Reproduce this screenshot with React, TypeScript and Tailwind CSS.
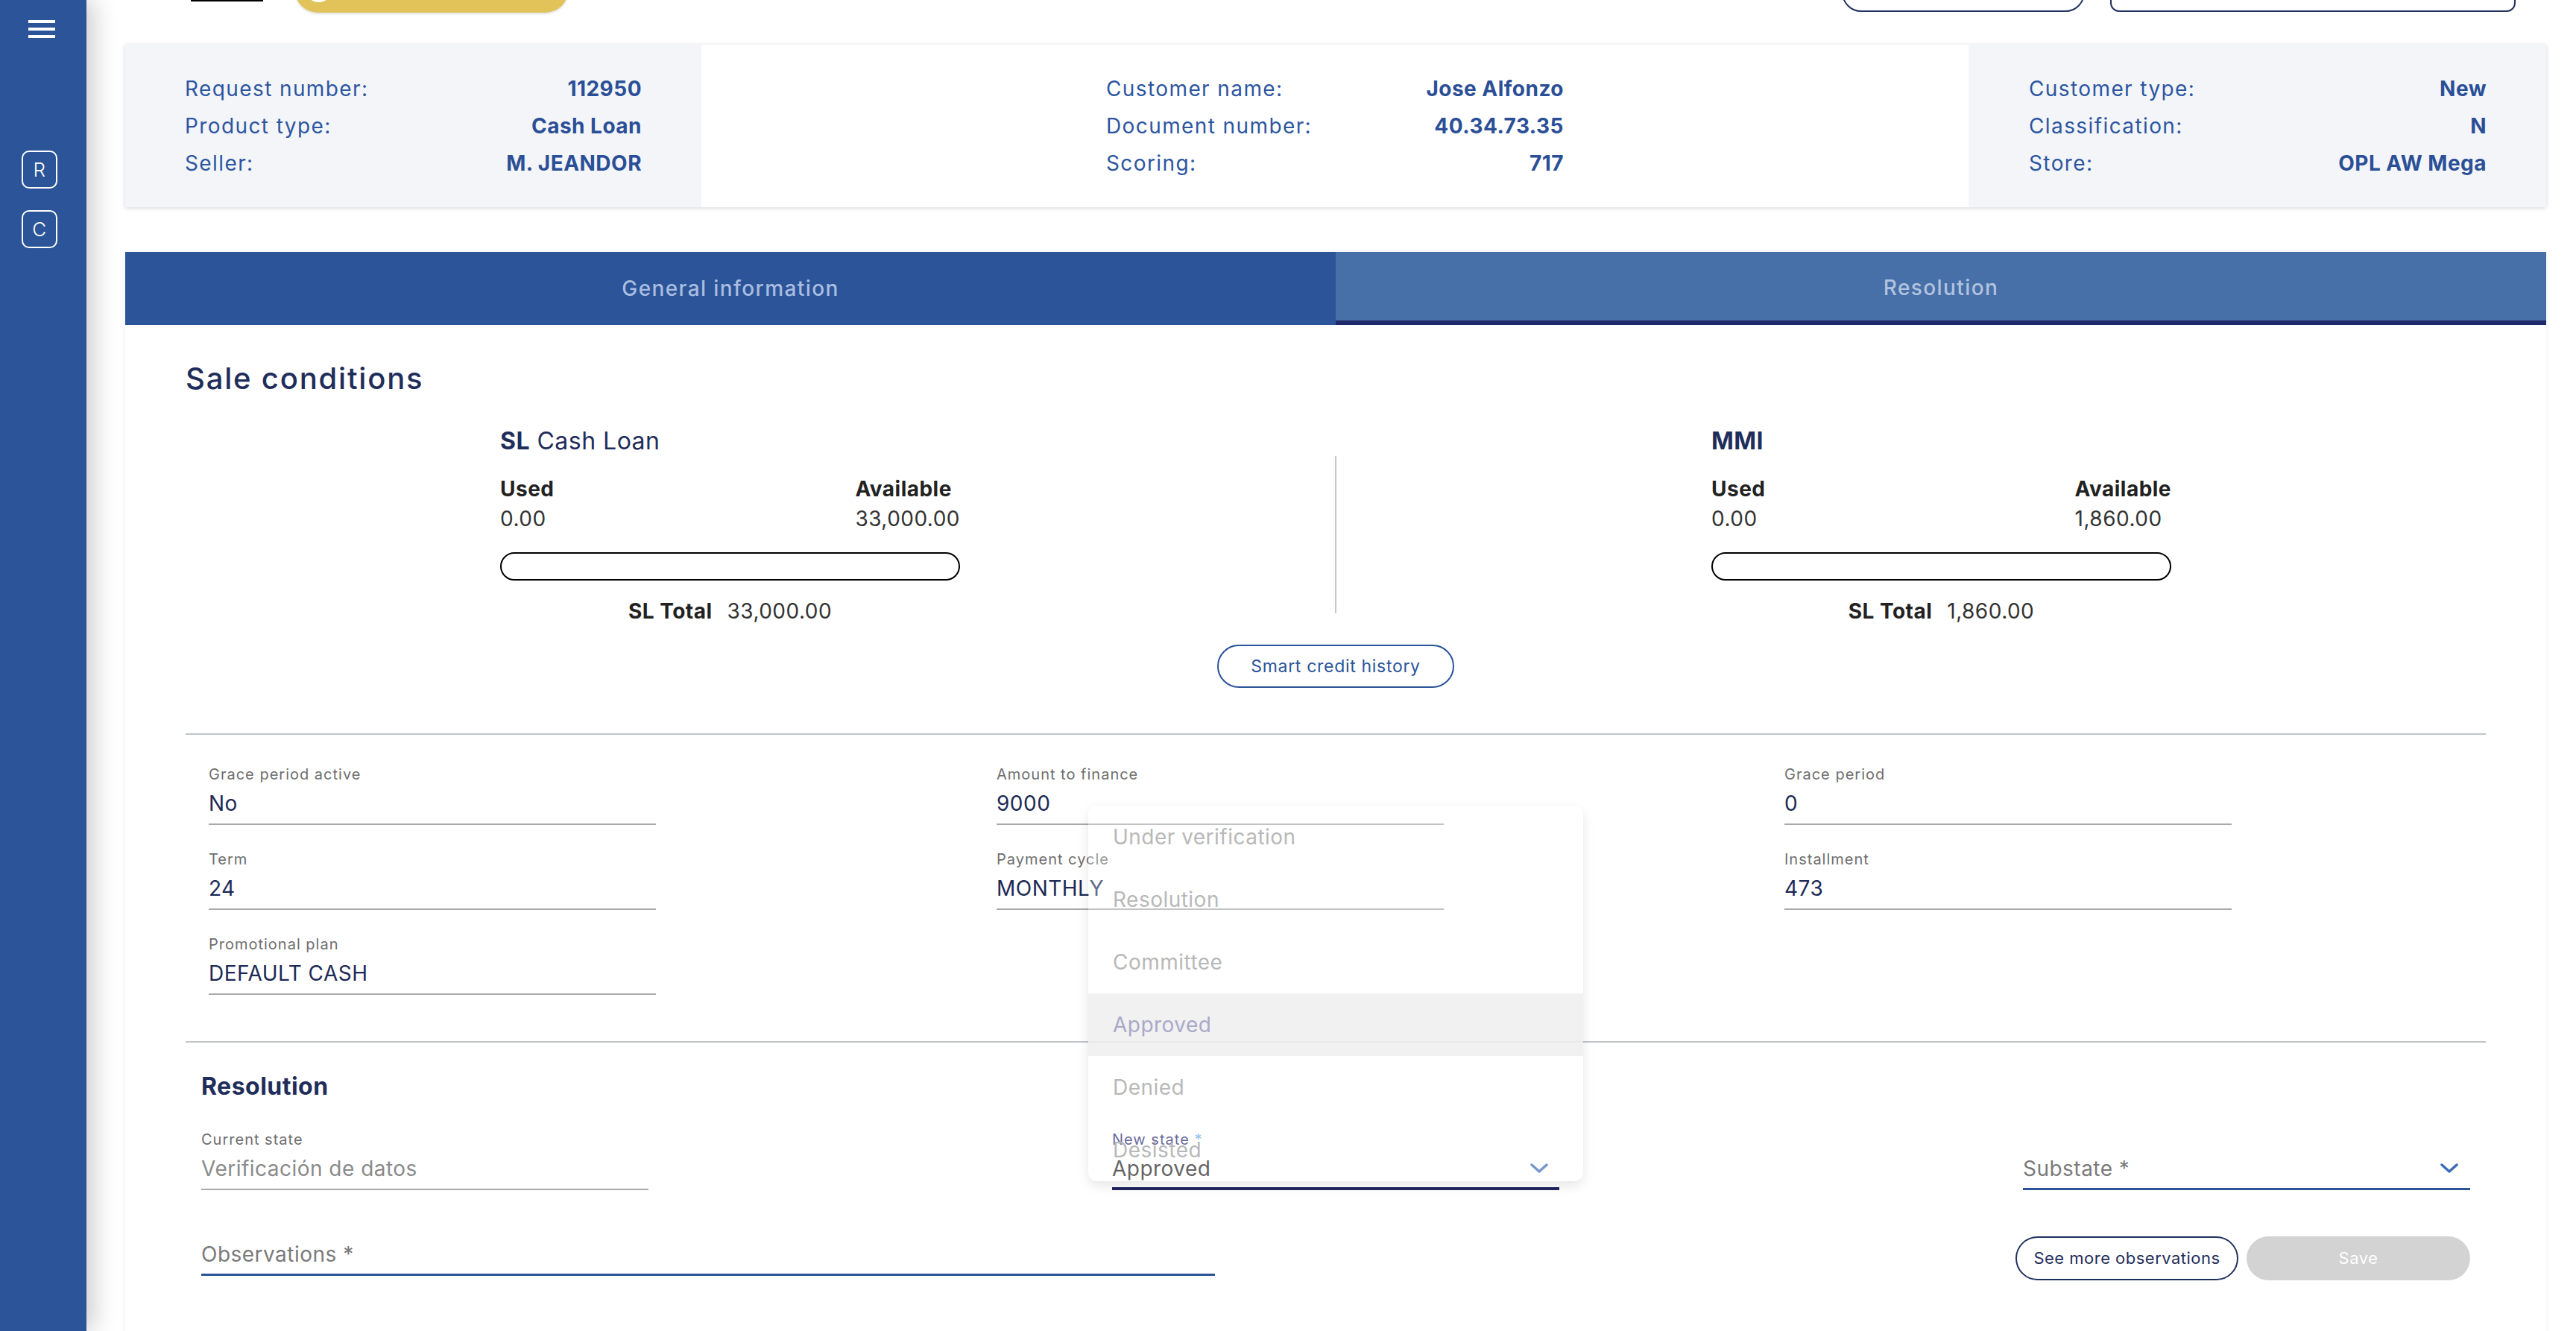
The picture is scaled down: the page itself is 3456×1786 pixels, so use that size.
import React from 'react';

interface InfoItem {
  label: string;
  value: string;
}

const leftInfo: InfoItem[] = [
  { label: 'Request number:', value: '112950' },
  { label: 'Product type:', value: 'Cash Loan' },
  { label: 'Seller:', value: 'M. JEANDOR' },
];

const middleInfo: InfoItem[] = [
  { label: 'Customer name:', value: 'Jose Alfonzo' },
  { label: 'Document number:', value: '40.34.73.35' },
  { label: 'Scoring:', value: '717' },
];

const rightInfo: InfoItem[] = [
  { label: 'Customer type:', value: 'New' },
  { label: 'Classification:', value: 'N' },
  { label: 'Store:', value: 'OPL AW Mega' },
];

const stateOptions = ['Under verification', 'Resolution', 'Committee', 'Approved', 'Denied', 'Desisted'];

const InfoRows: React.FC<{ items: InfoItem[] }> = ({ items }) => (
  <div className="flex w-full flex-col">
    {items.map((item) => (
      <div key={item.label} className="flex h-[50px] items-center justify-between text-[28px] text-[#2d56a0]">
        <span className="tracking-[0.05em]">{item.label}</span>
        <span className="font-bold text-[#2b4f96]">{item.value}</span>
      </div>
    ))}
  </div>
);

const Chevron: React.FC = () => (
  <svg width="26" height="14" viewBox="0 0 26 14" fill="none" className="shrink-0">
    <polyline points="3,2 13,11 23,2" stroke="#3d6cb5" strokeWidth="3.5" strokeLinecap="round" strokeLinejoin="round" />
  </svg>
);

const Field: React.FC<{ label: string; value: string }> = ({ label, value }) => (
  <div className="flex w-[600px] flex-col">
    <span className="h-[28px] text-[20px] leading-[28px] tracking-[0.05em] text-[#6e6e6e]">{label}</span>
    <div className="mt-[7px] border-b-2 border-[#a8a8a8] pb-[9px]">
      <span className="block h-[36px] text-[28px] leading-[36px] text-[#1c2a55]">{value}</span>
    </div>
  </div>
);

const CreditPanel: React.FC<{ title: React.ReactNode; available: string; total: string }> = ({ title, available, total }) => (
  <div className="flex w-[617px] flex-col text-[#222]">
    <div className="h-[40px] text-[32px] leading-[40px] text-[#1f2d5a]">{title}</div>
    <div className="mt-[24px] flex justify-between text-[28px] leading-[40px]">
      <div className="flex flex-col">
        <span className="font-bold">Used</span>
        <span className="text-[#333]">0.00</span>
      </div>
      <div className="flex flex-col">
        <span className="font-bold">Available</span>
        <span className="text-[#333]">{available}</span>
      </div>
    </div>
    <div className="mt-[25px] h-[38px] rounded-full border-2 border-black" />
    <div className="mt-[21px] flex h-[40px] items-center justify-center gap-[20px] text-[28px]">
      <span className="font-bold">SL Total</span>
      <span className="text-[#333]">{total}</span>
    </div>
  </div>
);

export default function App() {
  return (
    <div className="flex h-[1786px] w-[3456px] overflow-hidden bg-white font-['Inter',sans-serif] tracking-[0.03em]">
      {/* Sidebar */}
      <aside className="relative z-10 flex w-[116px] shrink-0 flex-col bg-[#2b5499] pt-[27px] shadow-[10px_0_30px_rgba(0,0,0,0.2)]">
        <div className="ml-[38px] flex w-[36px] flex-col gap-[6px]">
          <span className="h-[4px] bg-white" />
          <span className="h-[4px] bg-white" />
          <span className="h-[4px] bg-white" />
        </div>
        <div className="ml-[29px] mt-[151px] flex h-[51px] w-[48px] items-center justify-center rounded-[10px] border-2 border-white text-[26px] font-light text-white">
          R
        </div>
        <div className="ml-[29px] mt-[29px] flex h-[51px] w-[48px] items-center justify-center rounded-[10px] border-2 border-white text-[26px] font-light text-white">
          C
        </div>
      </aside>

      <main className="flex-1 pl-[52px] pr-[40px]">
        {/* Top bar, scrolled mostly out of view */}
        <div className="flex h-[17px] items-end">
          <div className="ml-[88px] h-[17px] w-[97px] border-t-2 border-black" />
          <div className="ml-[42px] flex h-[64px] w-[368px] items-center gap-[30px] rounded-full bg-[#e1c35a] pl-[15px] shadow-[0_2px_3px_rgba(0,0,0,0.12)]">
            <span className="h-[35px] w-[35px] rounded-full bg-white" />
            <span className="mt-[-6px] flex gap-[40px]">
              <span className="h-[20px] w-[10px] rounded-full bg-white/80" />
              <span className="h-[20px] w-[10px] rounded-full bg-white/80" />
              <span className="h-[20px] w-[10px] rounded-full bg-white/80" />
              <span className="h-[20px] w-[10px] rounded-full bg-white/80" />
            </span>
          </div>
          <div className="flex-1" />
          <div className="mb-[1px] flex h-[70px] w-[326px] items-center rounded-[26px] border-2 border-[#22325e] pl-[55px]">
            <span className="mt-[4px] h-[22px] w-[20px] rounded-[6px] bg-[#22325e]" />
          </div>
          <div className="mb-[1px] ml-[34px] mr-[41px] h-[70px] w-[544px] rounded-[12px] border-2 border-[#22325e]" />
        </div>

        {/* Info card */}
        <div className="mt-[43px] grid h-[218px] grid-cols-[773px_1fr_775px] shadow-[0_1px_6px_rgba(0,0,0,0.16)]">
          <div className="flex items-center bg-[#f3f5f9] px-[80px]">
            <InfoRows items={leftInfo} />
          </div>
          <div className="flex items-center justify-center bg-white">
            <div className="w-[614px]">
              <InfoRows items={middleInfo} />
            </div>
          </div>
          <div className="flex items-center bg-[#f3f5f9] pl-[81px] pr-[80px]">
            <InfoRows items={rightInfo} />
          </div>
        </div>

        {/* Tabs + body card */}
        <div className="mt-[60px] bg-white shadow-[0_0_6px_rgba(0,0,0,0.08)]">
          <div className="grid h-[98px] grid-cols-2 text-[28px] font-medium tracking-[0.05em]">
            <div className="flex items-center justify-center bg-[#2b5499] text-[#a9bde0]">General information</div>
            <div className="flex items-center justify-center border-b-[6px] border-[#1f2a6b] bg-[#4870a8] pt-[4px] text-[#b2c3df]">
              Resolution
            </div>
          </div>

          <div className="pb-[80px]">
            <h2 className="pl-[81px] pt-[48px] text-[40px] font-medium leading-[48px] tracking-[0.045em] text-[#1f2d5a]">
              Sale conditions
            </h2>

            <div className="mt-[40px] flex">
              <div className="flex flex-1 justify-center">
                <CreditPanel
                  title={
                    <>
                      <span className="font-bold">SL</span> Cash Loan
                    </>
                  }
                  available="33,000.00"
                  total="33,000.00"
                />
              </div>
              <div className="mt-[40px] h-[211px] w-[2px] bg-[#c8c8c8]" />
              <div className="flex flex-1 justify-center">
                <CreditPanel title={<span className="font-bold">MMI</span>} available="1,860.00" total="1,860.00" />
              </div>
            </div>

            <div className="mt-[25px] flex justify-center">
              <button className="h-[58px] w-[318px] rounded-full border-2 border-[#2b5499] text-[23px] tracking-[0.03em] text-[#2b5499]">
                Smart credit history
              </button>
            </div>

            <div className="mx-[81px] mt-[61px] h-[2px] bg-[#c0c4c8]" />

            <div className="mt-[39px] grid grid-cols-[repeat(3,600px)] gap-x-[457px] gap-y-[32px] pl-[112px]">
              <Field label="Grace period active" value="No" />
              <Field label="Amount to finance" value="9000" />
              <Field label="Grace period" value="0" />
              <Field label="Term" value="24" />
              <Field label="Payment cycle" value="MONTHLY" />
              <Field label="Installment" value="473" />
              <Field label="Promotional plan" value="DEFAULT CASH" />
            </div>

            <div className="mx-[81px] mt-[62px] h-[2px] bg-[#c0c4c8]" />

            <div className="pl-[102px]">
              <h3 className="mt-[39px] text-[32px] font-bold leading-[40px] text-[#1f2d5a]">Resolution</h3>

              <div className="mt-[37px] grid grid-cols-[repeat(3,600px)] gap-x-[622px]">
                <div className="flex w-[600px] flex-col">
                  <span className="h-[28px] text-[20px] leading-[28px] tracking-[0.05em] text-[#6e6e6e]">Current state</span>
                  <div className="mt-[7px] border-b-2 border-[#a8a8a8] pb-[9px]">
                    <span className="block h-[36px] text-[28px] leading-[36px] text-[#8a8a8a]">Verificación de datos</span>
                  </div>
                </div>

                {/* New state select with its open option panel */}
                <div className="relative flex w-[600px] flex-col">
                  <span className="h-[28px] text-[20px] leading-[28px] tracking-[0.05em] text-[#2a2a70]">
                    New state <span className="text-[#5aa8f0]">*</span>
                  </span>
                  <div className="mt-[7px] flex items-center justify-between border-b-4 border-[#23245e] pb-[7px] pr-[14px]">
                    <span className="block h-[36px] text-[28px] leading-[36px] text-[#222]">Approved</span>
                    <Chevron />
                  </div>
                  <div className="absolute left-[-32px] top-[-434px] z-20 flex h-[504px] w-[664px] flex-col overflow-hidden rounded-[12px] bg-white/30 shadow-[0_6px_16px_rgba(0,0,0,0.10)]">
                    {stateOptions.map((opt) => (
                      <div
                        key={opt}
                        className={
                          opt === 'Approved'
                            ? 'flex h-[84px] items-center bg-[#eeeeee]/80 pl-[33px] text-[28px] text-[#a9a9c9]'
                            : 'flex h-[84px] items-center pl-[33px] text-[28px] text-[#b8b8b8]'
                        }
                      >
                        {opt}
                      </div>
                    ))}
                  </div>
                </div>

                <div className="flex w-[600px] flex-col">
                  <span className="h-[28px]" />
                  <div className="mt-[7px] flex items-center justify-between border-b-[3px] border-[#2b5499] pb-[8px] pr-[15px]">
                    <span className="block h-[36px] text-[28px] leading-[36px] text-[#7a7a7a]">Substate *</span>
                    <Chevron />
                  </div>
                </div>
              </div>

              <div className="mt-[62px] flex w-[3044px] items-center justify-between">
                <div className="w-[1360px] border-b-[3px] border-[#2b5499] pb-[8px]">
                  <span className="block h-[36px] text-[28px] leading-[36px] text-[#7a7a7a]">Observations *</span>
                </div>
                <div className="flex gap-[11px]">
                  <button className="h-[59px] w-[299px] rounded-full border-2 border-[#22325e] text-[22px] text-[#1f2d5a]">
                    See more observations
                  </button>
                  <button className="h-[59px] w-[300px] rounded-full bg-[#d3d3d3] text-[22px] text-white">Save</button>
                </div>
              </div>
            </div>
          </div>
        </div>
      </main>
    </div>
  );
}
